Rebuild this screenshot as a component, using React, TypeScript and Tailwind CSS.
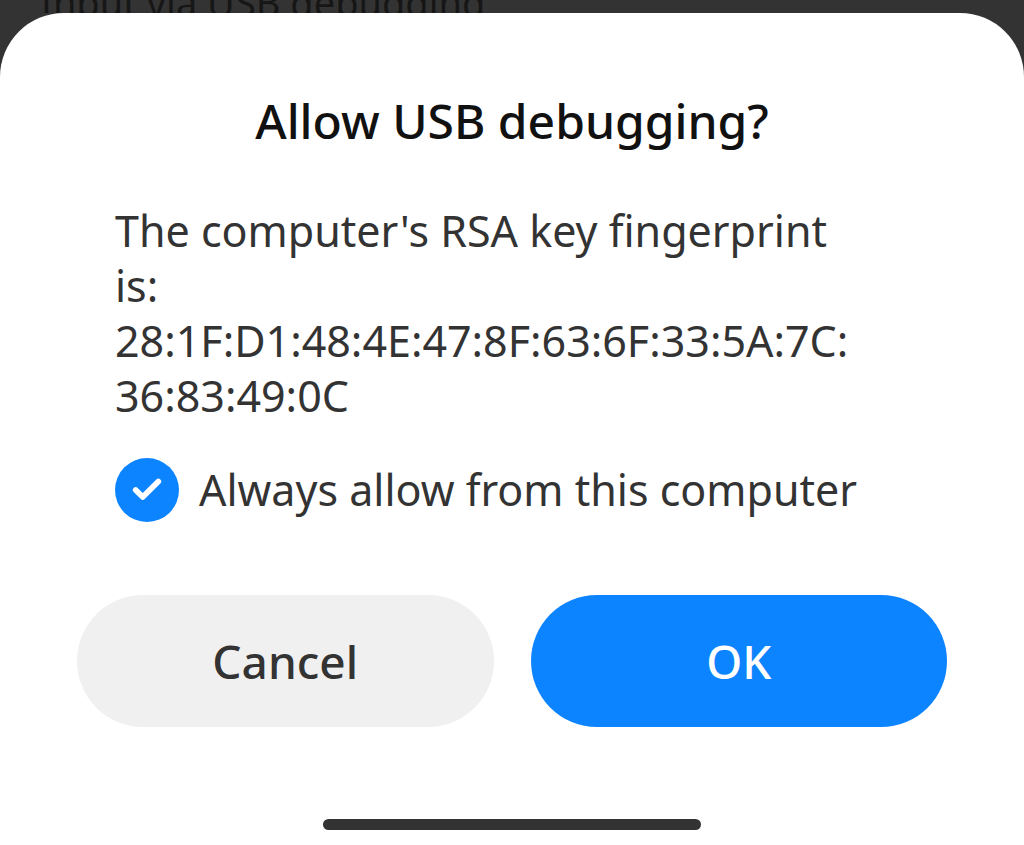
import { Check } from 'lucide-react'

const font = { fontFamily: '"Noto Sans", "Open Sans", sans-serif' }

export default function App() {
  return (
    <div className="flex h-[845px] w-[1024px] flex-col overflow-hidden bg-[#333333]" style={font}>
      <div className="relative h-[13px] shrink-0 overflow-hidden">
        <p className="absolute bottom-[-8px] left-[40px] whitespace-nowrap text-[38px] leading-none text-[#161616]">
          Input via USB debugging
        </p>
      </div>

      <div className="flex flex-1 flex-col rounded-t-[64px] bg-white">
        <h1 className="mt-[78px] text-center text-[48px] font-medium leading-[60px] text-[#111]">
          Allow USB debugging?
        </h1>

        <div className="mt-[52px] px-[115px] text-[43px] leading-[55px] text-[#333]">
          <p>
            The computer's RSA key fingerprint
            <br />
            is:
          </p>
          <p>28:1F:D1:48:4E:47:8F:63:6F:33:5A:7C:</p>
          <p>36:83:49:0C</p>
        </div>

        <div className="mt-[35px] flex h-[64px] items-center gap-[20px] px-[115px]">
          <span className="flex h-[64px] w-[64px] items-center justify-center rounded-full bg-[#0d84ff]">
            <Check size={34} strokeWidth={4} className="text-white" />
          </span>
          <span className="text-[43px] leading-[64px] text-[#333]">Always allow from this computer</span>
        </div>

        <div className="mt-[73px] flex gap-[37px] px-[77px]">
          <button className="h-[132px] flex-1 rounded-full bg-[#f0f0f0] text-[46px] font-medium text-[#333]">
            Cancel
          </button>
          <button className="h-[132px] flex-1 rounded-full bg-[#0d84ff] text-[46px] font-medium text-white">
            OK
          </button>
        </div>

        <div className="mt-auto mb-[15px] flex justify-center">
          <div className="h-[11px] w-[378px] rounded-full bg-[#333]" />
        </div>
      </div>
    </div>
  )
}
